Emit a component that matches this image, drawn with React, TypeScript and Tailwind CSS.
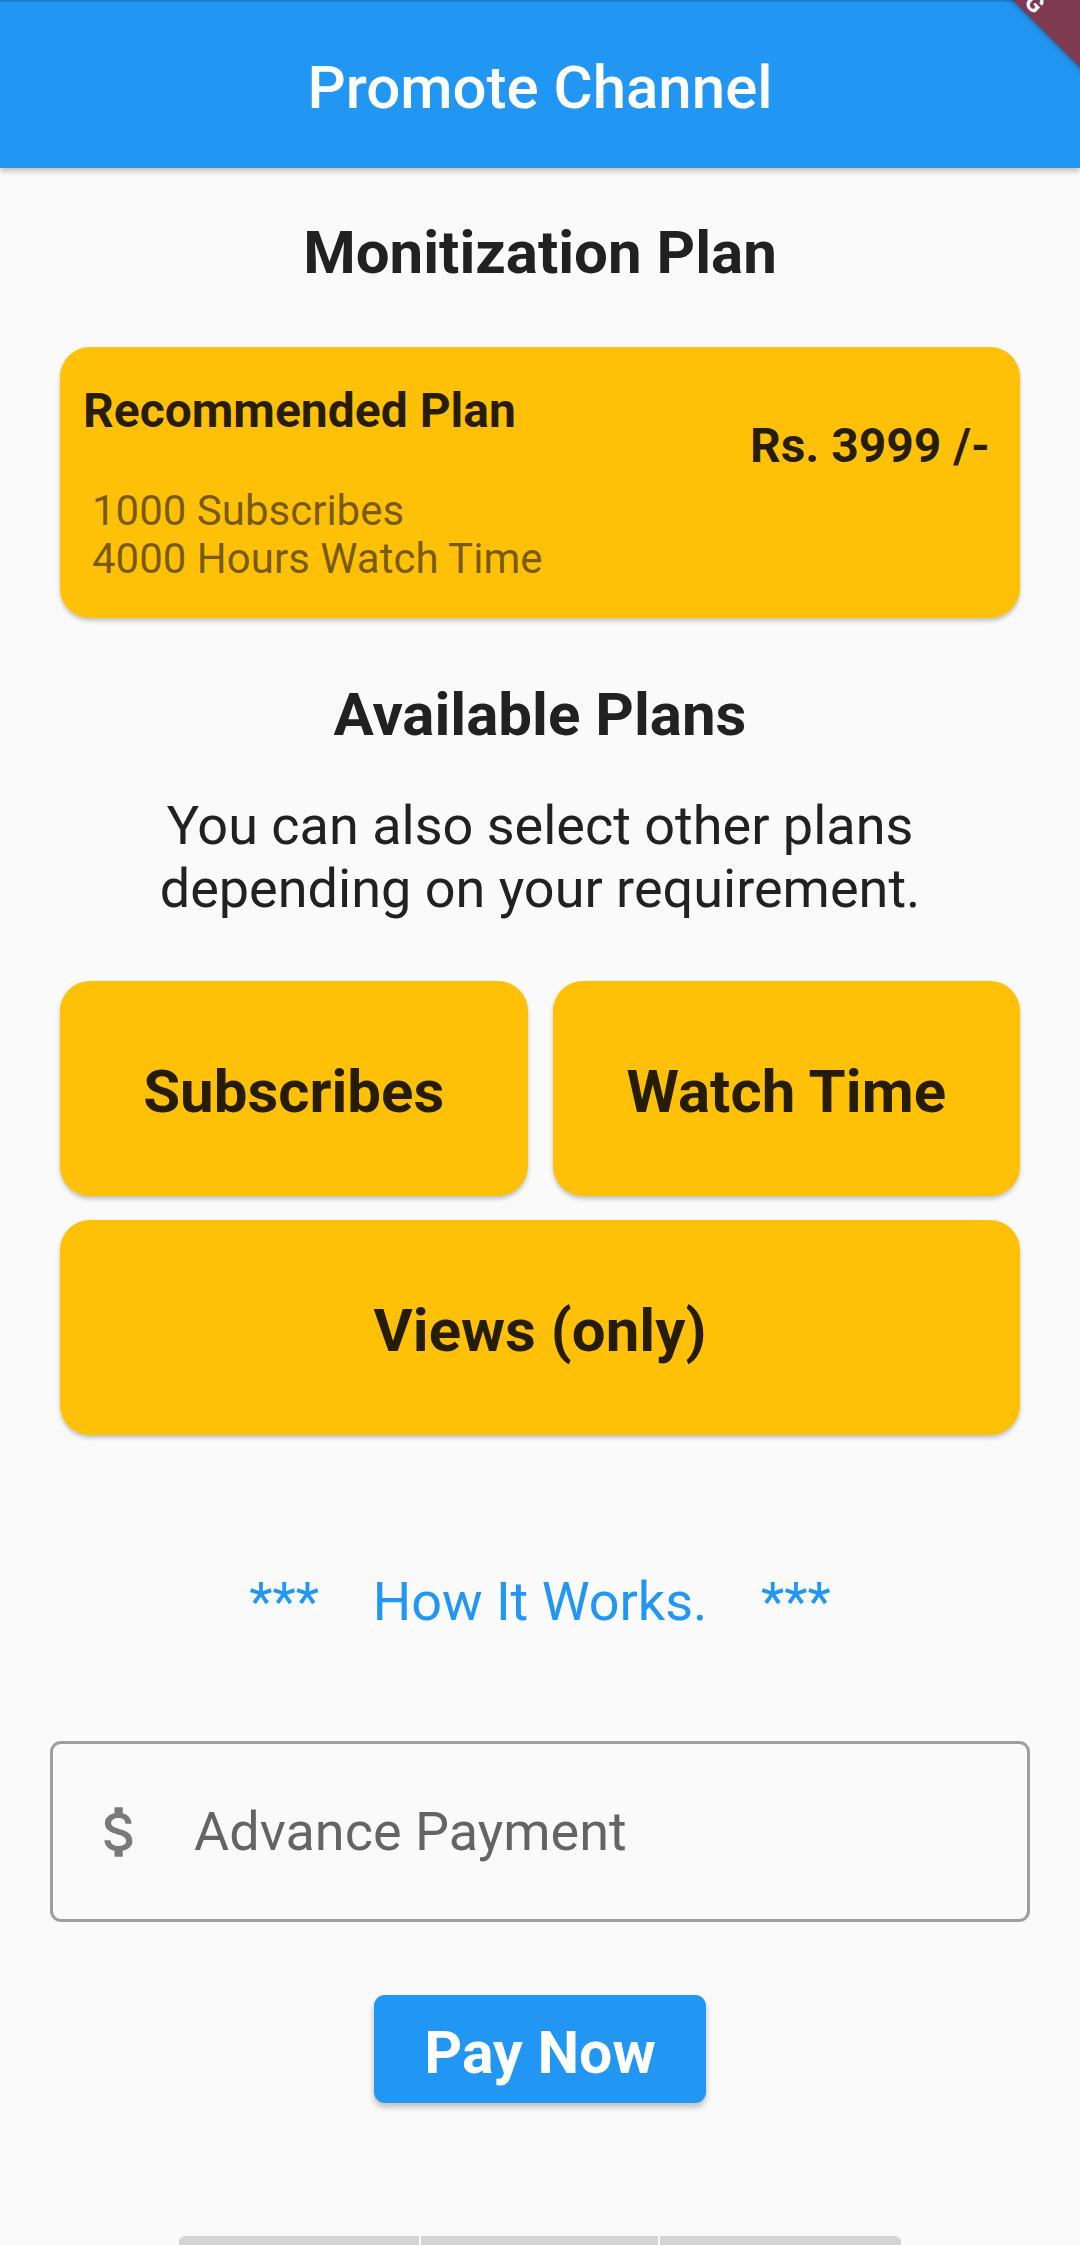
import React from 'react';

const DollarIcon = () => (
  <svg viewBox="0 0 24 24" className="w-[66px] h-[66px] shrink-0" fill="#7a7a7a">
    <path d="M11.8 10.9c-2.27-.59-3-1.2-3-2.15 0-1.09 1.01-1.85 2.7-1.85 1.78 0 2.44.85 2.5 2.1h2.21c-.07-1.72-1.12-3.3-3.21-3.81V3h-3v2.16c-1.94.42-3.5 1.68-3.5 3.61 0 2.31 1.91 3.46 4.7 4.13 2.5.6 3 1.48 3 2.41 0 .69-.49 1.79-2.7 1.79-2.06 0-2.87-.92-2.98-2.1h-2.2c.12 2.19 1.76 3.42 3.68 3.83V21h3v-2.15c1.950-.37 3.5-1.5 3.5-3.55 0-2.84-2.43-3.81-4.7-4.4z" />
  </svg>
);

const PlanButton = ({ label, wide }: { label: string; wide?: boolean }) => (
  <button
    className={
      'h-[215px] rounded-[30px] bg-[#FFC107] shadow-[0_3px_4px_rgba(0,0,0,0.22)] flex items-center justify-center pt-[7px] text-[60px] font-bold leading-[1.17] text-black/85 ' +
      (wide ? 'col-span-2' : '')
    }
  >
    {label}
  </button>
);

const App = (): JSX.Element => {
  return (
    <div
      className="relative w-[1080px] min-h-[2245px] overflow-hidden bg-[#fafafa] flex flex-col"
      style={{ fontFamily: 'Roboto, "Noto Sans", sans-serif' }}
    >
      {/* App bar */}
      <div className="h-[168px] bg-[#2196F3] border-t-2 border-[#1b7fd0] shadow-[0_3px_6px_rgba(0,0,0,0.25)] flex items-center justify-center pt-[6px] z-10">
        <h1 className="text-white text-[60px] font-medium leading-[1.17]">Promote Channel</h1>
      </div>

      {/* Recommended plan */}
      <h2 className="mt-[50px] text-center text-[60px] font-bold leading-[70px] text-[#212121]">
        Monitization Plan
      </h2>

      <div className="mt-[59px] mx-[60px] h-[271px] rounded-[30px] bg-[#FFC107] shadow-[0_3px_4px_rgba(0,0,0,0.22)] flex justify-between pl-[23px] pr-[30px]">
        <div className="flex flex-col pt-[36px]">
          <span className="text-[48px] font-bold leading-[56px] text-black/85">Recommended Plan</span>
          <div className="mt-[48px] pl-[9px] flex flex-col text-[42px] leading-[48px] text-black/55">
            <span>1000 Subscribes</span>
            <span>4000 Hours Watch Time</span>
          </div>
        </div>
        <span className="pt-[71px] text-[48px] font-bold leading-[56px] text-black/85">Rs. 3999 /-</span>
      </div>

      {/* Available plans */}
      <h2 className="mt-[62px] text-center text-[60px] font-bold leading-[70px] text-[#212121]">
        Available Plans
      </h2>
      <p className="mt-[44px] text-center text-[54px] leading-[63px] text-[#212121]">
        You can also select other plans
        <br />
        depending on your requirement.
      </p>

      <div className="mt-[61px] mx-[60px] grid grid-cols-2 gap-x-[25px] gap-y-[24px]">
        <PlanButton label="Subscribes" />
        <PlanButton label="Watch Time" />
        <PlanButton label="Views (only)" wide />
      </div>

      <p className="mt-[135px] text-center text-[54px] leading-[63px] text-[#2196F3] whitespace-pre">
        {'***    How It Works.    ***'}
      </p>

      {/* Payment field */}
      <div className="mt-[108px] mx-[50px] h-[181px] rounded-[11px] border-[3px] border-[#9e9e9e] flex items-center pl-[34px] gap-[41px]">
        <DollarIcon />
        <span className="text-[54px] leading-[63px] text-black/60">Advance Payment</span>
      </div>

      <div className="mt-[73px] flex justify-center">
        <button className="w-[332px] h-[108px] rounded-[11px] bg-[#2196F3] shadow-[0_4px_6px_rgba(0,0,0,0.25)] pt-[8px] text-white text-[59px] font-bold leading-[1.17]">
          Pay Now
        </button>
      </div>

      {/* Partially visible bottom strip */}
      <div className="mt-auto flex justify-center gap-[2px]">
        <div className="w-[240px] h-[9px] rounded-tl-[6px] bg-[#d4d4d4]" />
        <div className="w-[237px] h-[9px] bg-[#d4d4d4]" />
        <div className="w-[241px] h-[9px] rounded-tr-[6px] bg-[#d4d4d4]" />
      </div>

      {/* Debug banner */}
      <div className="absolute left-[874px] top-[-61px] w-[300px] h-[60px] rotate-45 bg-[#7e3a50] shadow-[0_0_6px_rgba(0,0,0,0.4)] z-20 flex justify-center pt-[34px]">
        <span className="text-white text-[24px] font-bold leading-[26px] tracking-[1px]">DEBUG</span>
      </div>
    </div>
  );
};

export default App;
